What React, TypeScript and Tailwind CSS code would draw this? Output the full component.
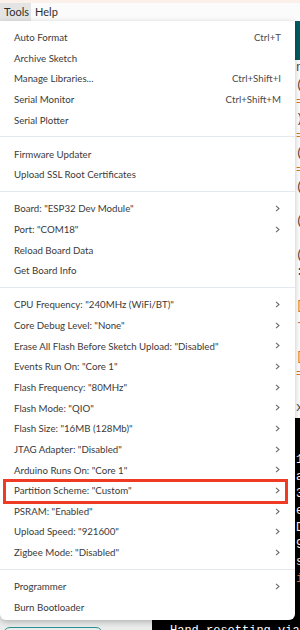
import React from "react";

type Row =
  | { kind: "item"; label: string; shortcut?: string; sub?: boolean; mark?: boolean }
  | { kind: "sep" };

const rows: Row[] = [
  { kind: "item", label: "Auto Format", shortcut: "Ctrl+T" },
  { kind: "item", label: "Archive Sketch" },
  { kind: "item", label: "Manage Libraries...", shortcut: "Ctrl+Shift+I" },
  { kind: "item", label: "Serial Monitor", shortcut: "Ctrl+Shift+M" },
  { kind: "item", label: "Serial Plotter" },
  { kind: "sep" },
  { kind: "item", label: "Firmware Updater" },
  { kind: "item", label: "Upload SSL Root Certificates" },
  { kind: "sep" },
  { kind: "item", label: 'Board: "ESP32 Dev Module"', sub: true },
  { kind: "item", label: 'Port: "COM18"', sub: true },
  { kind: "item", label: "Reload Board Data" },
  { kind: "item", label: "Get Board Info" },
  { kind: "sep" },
  { kind: "item", label: 'CPU Frequency: "240MHz (WiFi/BT)"', sub: true },
  { kind: "item", label: 'Core Debug Level: "None"', sub: true },
  { kind: "item", label: 'Erase All Flash Before Sketch Upload: "Disabled"', sub: true },
  { kind: "item", label: 'Events Run On: "Core 1"', sub: true },
  { kind: "item", label: 'Flash Frequency: "80MHz"', sub: true },
  { kind: "item", label: 'Flash Mode: "QIO"', sub: true },
  { kind: "item", label: 'Flash Size: "16MB (128Mb)"', sub: true },
  { kind: "item", label: 'JTAG Adapter: "Disabled"', sub: true },
  { kind: "item", label: 'Arduino Runs On: "Core 1"', sub: true },
  { kind: "item", label: 'Partition Scheme: "Custom"', sub: true, mark: true },
  { kind: "item", label: 'PSRAM: "Enabled"', sub: true },
  { kind: "item", label: 'Upload Speed: "921600"', sub: true },
  { kind: "item", label: 'Zigbee Mode: "Disabled"', sub: true },
  { kind: "sep" },
  { kind: "item", label: "Programmer", sub: true },
  { kind: "item", label: "Burn Bootloader" },
];

const editorChars: [string, boolean][] = [
  ["n", false], ["(", false], ["=", true], [")", false], ["=", true], ["(", false],
  ["=", true], ["(", false], ["", false], ["(", false], ["", false], ["(", false],
  [":", false], ["", false], ["[", true], ["-", true], ["", false], ["[", true],
  ["=", true], ["", false], ["x", false],
];

const termChars: [string, boolean][] = [
  ["", false], ["", false], ["1", false], ["a", false], ["3", false], ["e", false],
  ["D", false], ["9", false], ["s", false], ["i", true], ["", false],
];

function Chevron() {
  return (
    <svg width="5" height="7" viewBox="0 0 5 7" className="shrink-0">
      <path d="M1 0.8 L4 3.5 L1 6.2" fill="none" stroke="#6b6b6b" strokeWidth="1.1" />
    </svg>
  );
}

export default function App() {
  return (
    <div
      className="relative w-[300px] h-[630px] overflow-hidden bg-white"
      style={{ fontFamily: "Lato, 'Noto Sans', sans-serif" }}
    >
      {/* IDE background */}
      <div className="h-[3px] bg-[#fcf1ea]" />
      <div className="h-[18px] flex items-stretch bg-[#fbfbfb] text-[11px] text-[#2e2e2e]">
        <div className="w-[31px] bg-[#e4e4e4] flex items-center pl-[4px]">Tools</div>
        <div className="flex items-center pl-[4px]">Help</div>
      </div>
      <div className="flex h-[609px]">
        <div className="w-[152px] shrink-0 bg-[#ebeded] flex flex-col justify-end overflow-hidden">
          <div className="ml-[3px] w-[100px] h-[14px] mb-[-11px] shrink-0 rounded-[7px] border-[1.5px] border-[#2a8f91]" />
        </div>
        <div className="flex-1 min-w-0 flex flex-col overflow-hidden">
          <div className="h-[39px] shrink-0 bg-[#005c5f]" />
          <div className="h-[358px] shrink-0 bg-white flex overflow-hidden">
            <div className="w-[144px] shrink-0" />
            <div className="flex flex-col text-[12px]" style={{ fontFamily: "'Liberation Mono', monospace" }}>
              {editorChars.map(([c, o], i) => (
                <div key={i} className={`h-[17px] leading-[17px] ${o ? "text-[#d77a2a]" : "text-[#444]"}`}>
                  {c || "\u00a0"}
                </div>
              ))}
            </div>
          </div>
          <div
            className="flex-1 min-h-0 bg-black flex flex-col overflow-hidden"
            style={{ fontFamily: "'Liberation Mono', monospace" }}
          >
            <div className="flex-1 min-h-0 flex overflow-hidden">
              <div className="w-[144px] shrink-0" />
              <div className="flex flex-col text-[12px]">
                {termChars.map(([c, o], i) => (
                  <div key={i} className={`h-[17px] leading-[17px] ${o ? "text-[#e0702a]" : "text-white"}`}>
                    {c || "\u00a0"}
                  </div>
                ))}
              </div>
            </div>
            <div className="pl-[18px] h-[14px] shrink-0 leading-[14px] mb-[-8px] text-[12px] text-white whitespace-nowrap">
              Hand resetting via RTS pin...
            </div>
          </div>
        </div>
      </div>

      {/* Dropdown menu */}
      <div className="absolute left-0 top-[21px] w-[295px] bg-white rounded-b-[6px] shadow-[0_2px_6px_rgba(0,0,0,0.25)] pt-[6px] pb-[3px] text-[9.7px] text-[#3a3a3a]">
        {rows.map((r, i) =>
          r.kind === "sep" ? (
            <div key={i} className="h-[13.33px] flex items-center">
              <div className="h-px w-full bg-[#e3e8f1]" />
            </div>
          ) : (
            <div key={i} className="relative h-[20.67px] flex items-center justify-between pl-[14px] pr-[15px]">
              <span className="whitespace-nowrap">{r.label}</span>
              {r.shortcut ? (
                <span className="text-[#4a4a4a] mr-[-1px]">{r.shortcut}</span>
              ) : r.sub ? (
                <Chevron />
              ) : null}
              {r.mark ? (
                <div className="absolute left-[3px] top-[-1px] bottom-[-3px] w-[285px] border-[3px] border-[#ef3a24]" />
              ) : null}
            </div>
          )
        )}
      </div>
    </div>
  );
}
